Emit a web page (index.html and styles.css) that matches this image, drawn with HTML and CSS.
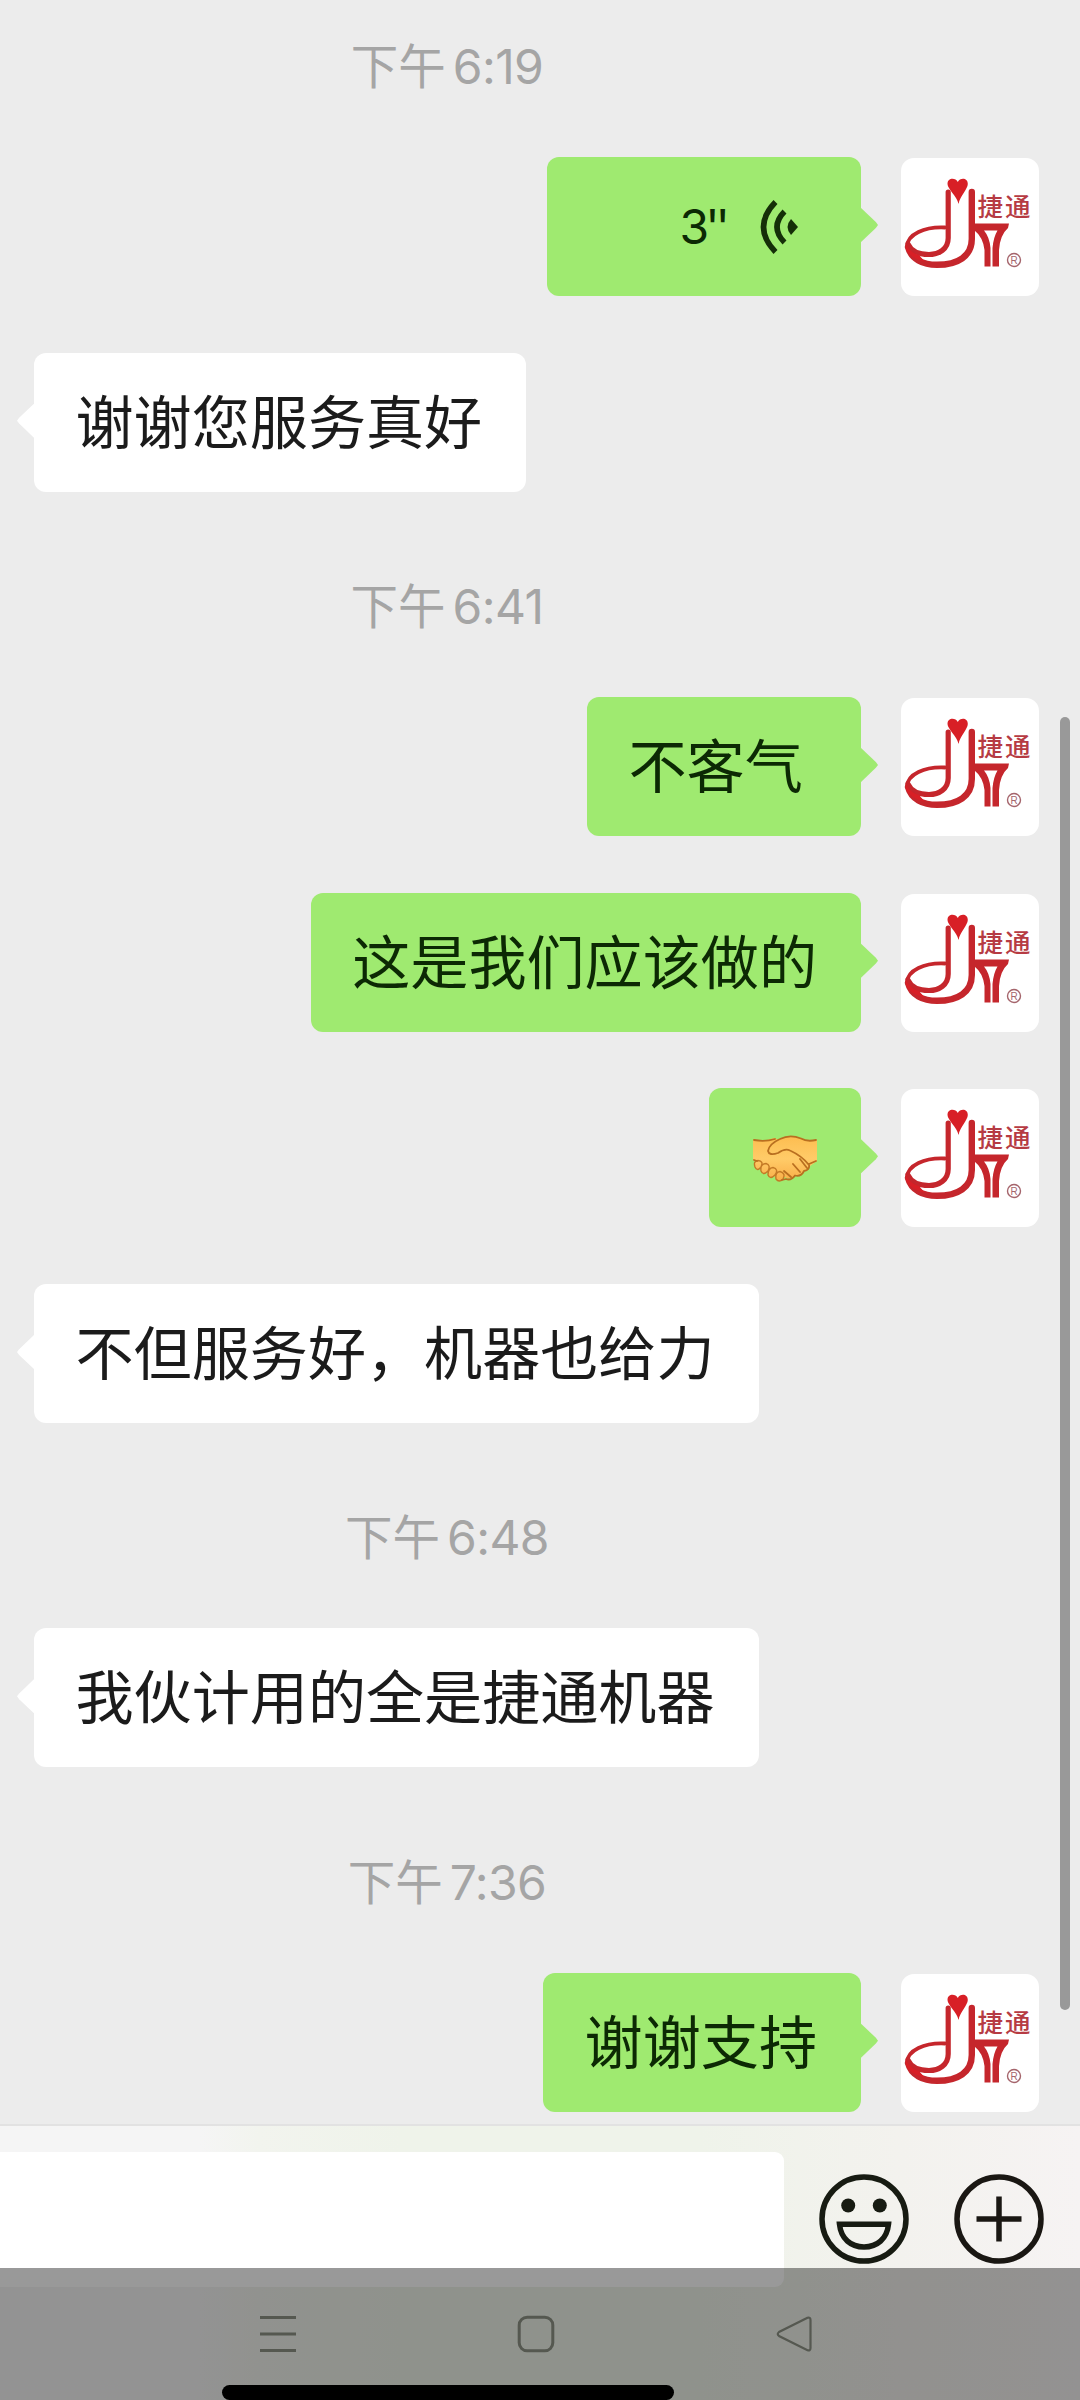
FILE: index.html
```
<!DOCTYPE html>
<html lang="zh-CN">
<head>
<meta charset="utf-8">
<title>聊天</title>
<link rel="stylesheet" href="styles.css">
</head>
<body>
<main class="chat">
  <time class="time">下午<span>6:19</span></time>
  <div class="row mine"><div class="bubble voice"><span>3''</span>
    <svg width="40" height="56" viewBox="0 0 40 56"><g fill="none" stroke="#152f08" stroke-width="5.500"><path d="M15.500 3Q-8.500 28 15.500 53"/><path d="M24.500 12.500Q9.500 28 24.500 43.500"/></g><path d="M31 20L38 28L31 36Q24 28 31 20Z" fill="#152f08"/></svg>
  </div>
  <svg class="avatar" viewBox="0 0 138 138"><g id="logo">
    <g fill="none" stroke="#c5262c" stroke-linecap="round">
      <path d="M47.200 34V80C47.200 91 38 96.500 28 96.500C18 96.500 10 93 7 86" stroke-width="5.200"/>
      <path d="M44 69.500C24 68.500 6 76 6 89" stroke-width="3.800"/>
      <path d="M7 89C10 101 22 106.800 36 106.800C57 106.800 70.800 98 70.800 81V34" stroke-width="6.400"/>
      <circle cx="113" cy="102" r="6.500" stroke-width="1.400" stroke="#a5656c"/>
    </g>
    <path d="M5 85C7 91 11 95 18 97L24 104C14 101 7 97 5 91Z" fill="#d81f26"/>
    <path d="M73 65.500H108L107 70Q99 77 98 92V108.500H91.500V90Q92.500 79 96.500 72.500H83Q88.500 79 89.500 90V108.500H83.500V92Q82 79 73 72Z" fill="#c5262c"/>
    <path d="M57.500 46C56 38 46.500 31 46.500 26C46.500 19.500 54.500 19.500 56.800 24C59 19.500 66.800 19.500 66.800 26C66.800 31 59 38 57.500 46Z" fill="#d81f26"/>
    <text class="logo-name" x="76.500" y="57.500">捷通</text>
    <text class="logo-mark" x="113" y="106" text-anchor="middle">R</text>
  </g></svg></div>
  <div class="row"><div class="bubble">谢谢您服务真好</div></div>
  <time class="time">下午<span>6:41</span></time>
  <div class="row mine"><div class="bubble short">不客气</div><svg class="avatar" viewBox="0 0 138 138"><use href="#logo"/></svg></div>
  <div class="row mine"><div class="bubble">这是我们应该做的</div><svg class="avatar" viewBox="0 0 138 138"><use href="#logo"/></svg></div>
  <div class="row mine"><div class="bubble emoji">
    <svg width="66" height="50" viewBox="0 0 66 50"><defs><linearGradient id="skin" gradientUnits="userSpaceOnUse" x1="0" y1="2" x2="0" y2="48"><stop stop-color="#fdbd50"/><stop offset=".5" stop-color="#ffcb68"/><stop offset="1" stop-color="#f9ac46"/></linearGradient></defs>
      <path fill="url(#skin)" d="M1 6Q13 8 22 4L35 9L58 31Q58 36 52 36Q49 42 43 41Q38 47 33 43Q26 46 22 42L6 32L1 25Z"/>
      <g fill="url(#skin)" stroke="#c47a26" stroke-width="1.400">
      <path d="M3 33Q1 27 6 26.500Q12 27 9 33Q5 38 3 33ZM9 37Q8 30 14 29.500Q19 31 16 37Q11 42 9 37ZM16 41Q16 34 21 33.500Q27 35 23 41Q18 46 16 41ZM24 45Q23 38 28 37.500Q34 39 31 45Q27 49 24 45Z"/></g>
      <path fill="url(#skin)" d="M65 6Q55 8 49 4Q38 0 28 5Q18 10 16 18Q17 23 26 19Q33 14 38 16L58 32L65 27Z"/>
      <g fill="none" stroke="#b96f20" stroke-width="1.800" stroke-linecap="round" stroke-linejoin="round">
      <path d="M2 6Q13 8 23 5M64 6Q55 8 49 4.500Q38 0 28 5Q17 10 16 17Q17 22 26 19Q33 14 38 16.500Q50 22 57 31Q58 36 52 37Q49 43 43 41.500Q39 47 34 45L30 46M57 30L64 27M2 26L5 27M32 37L39 43M41 30L48 38M48 25L55 34"/></g></svg>
  </div><svg class="avatar" viewBox="0 0 138 138"><use href="#logo"/></svg></div>
  <div class="row"><div class="bubble">不但服务好，机器也给力</div></div>
  <time class="time">下午<span>6:48</span></time>
  <div class="row"><div class="bubble">我伙计用的全是捷通机器</div></div>
  <time class="time">下午<span>7:36</span></time>
  <div class="row mine"><div class="bubble">谢谢支持</div><svg class="avatar" viewBox="0 0 138 138"><use href="#logo"/></svg></div>
  <div class="scrollbar"></div>
</main>
<footer class="composer">
  <div class="input"></div>
  <svg class="tool" viewBox="0 0 90 90"><g fill="none" stroke="#171b12" stroke-width="5.500"><circle cx="45" cy="45" r="42"/><path d="M20.500 50.300H69.500C68 65 58 73 45 73S22 65 20.500 50.300Z"/></g><circle cx="29.200" cy="31.500" r="7" fill="#171b12"/><circle cx="60.800" cy="31.500" r="7" fill="#171b12"/></svg>
  <svg class="tool" viewBox="0 0 90 90"><g fill="none" stroke="#1a1713" stroke-width="5.500"><circle cx="45" cy="45" r="42"/><path d="M22.500 45H67.500M45 22.500V67.500"/></g></svg>
</footer>
<nav class="system">
  <svg class="key" viewBox="0 0 38 38"><path d="M1 2.500H37M1 19H37M1 35.500H37"/></svg>
  <svg class="key" viewBox="0 0 38 38"><rect x="2.200" y="2.200" width="33.600" height="33.600" rx="8"/></svg>
  <svg class="key" viewBox="0 0 38 38"><path d="M32.500 2.800L4 17Q1.500 19 4 21L32.500 35.200Q35.500 36 35.500 33V5Q35.500 2 32.500 2.800Z" stroke-width="2.200"/></svg>
  <div class="home"></div>
</nav>
</body>
</html>
```
FILE: styles.css
```
* { box-sizing: border-box; }
body { margin: 0; width: 1080px; height: 2400px; overflow: hidden; position: relative; background: #ececec; font-family: Inter, "Noto Sans CJK SC", sans-serif; }
.chat { height: 2124px; padding-top: 32px; position: relative; overflow: hidden; }
.time { display: flex; justify-content: center; align-items: center; gap: 7px; width: 894px; height: 70px; margin-bottom: 55px; font-size: 47.500px; color: #a5a5a5; line-height: 70px; }
.time span { font-size: 48px; letter-spacing: -0.6px; }
.row + .time { margin-top: 80.300px; }
.row { display: flex; height: 139px; margin-bottom: 56.700px; padding-left: 34px; }
.row:has(+ .time) { margin-bottom: 0; }
.mine { justify-content: flex-end; gap: 40px; padding: 0 41px 0 0; }
.bubble { position: relative; height: 139px; padding: 0 44px 0 41.500px; border-radius: 12px; background: #fff; color: #1b1b1b; font-size: 58.100px; line-height: 140px; white-space: nowrap; }
.bubble::before { content: ""; position: absolute; left: -17px; top: 50px; width: 18px; height: 36px; background: inherit; clip-path: polygon(100% 0, 12% 42%, 0 50%, 12% 58%, 100% 100%); }
.mine .bubble { background: #9fea70; color: #0c2904; }
.mine .bubble::before { left: auto; right: -17px; transform: scaleX(-1); }
.mine .voice { width: 314px; display: flex; justify-content: flex-end; align-items: center; gap: 34px; padding-right: 61px; font-size: 48px; letter-spacing: -4px; line-height: 137px; }
.short { width: 274px; }
.mine .emoji { width: 152px; display: flex; align-items: center; justify-content: center; padding: 3px 0 0; }
.avatar { width: 138px; height: 138px; margin-top: 1px; border-radius: 13px; background: #fff; }
.logo-name { font: 500 25.500px "Noto Sans CJK SC", sans-serif; letter-spacing: 2px; fill: #b63b43; }
.logo-mark { font: 10px "Liberation Sans", sans-serif; letter-spacing: 0; fill: #a5656c; }
.scrollbar { position: absolute; left: 1060px; top: 717px; width: 10px; height: 1293px; border-radius: 5px; background: #999; }
.composer { height: 276px; display: flex; align-items: flex-start; padding-top: 26px; border-top: 2px solid #e2e2e2; background: linear-gradient(90deg, #f5f5f5 0 200px, #f2f4ee 260px, #eff3ea 400px, #eff3ea 700px, #f3f2ee 900px, #f6f3f3); }
.input { width: 784px; height: 135px; border-radius: 0 9px 9px 0; background: #fff; }
.tool { width: 90px; height: 90px; margin: 22px 0 0 35px; }
.tool + .tool { margin-left: 45px; }
.system { position: absolute; left: 0; top: 2268px; width: 1080px; height: 132px; display: flex; gap: 220px; padding: 47px 0 0 259px; background: rgba(0, 0, 0, .4); }
.key { width: 38px; height: 38px; fill: none; stroke: #555850; stroke-width: 3; }
.home { position: absolute; left: 222px; bottom: 0; width: 452px; height: 15px; border-radius: 8px; background: #000; }
```
